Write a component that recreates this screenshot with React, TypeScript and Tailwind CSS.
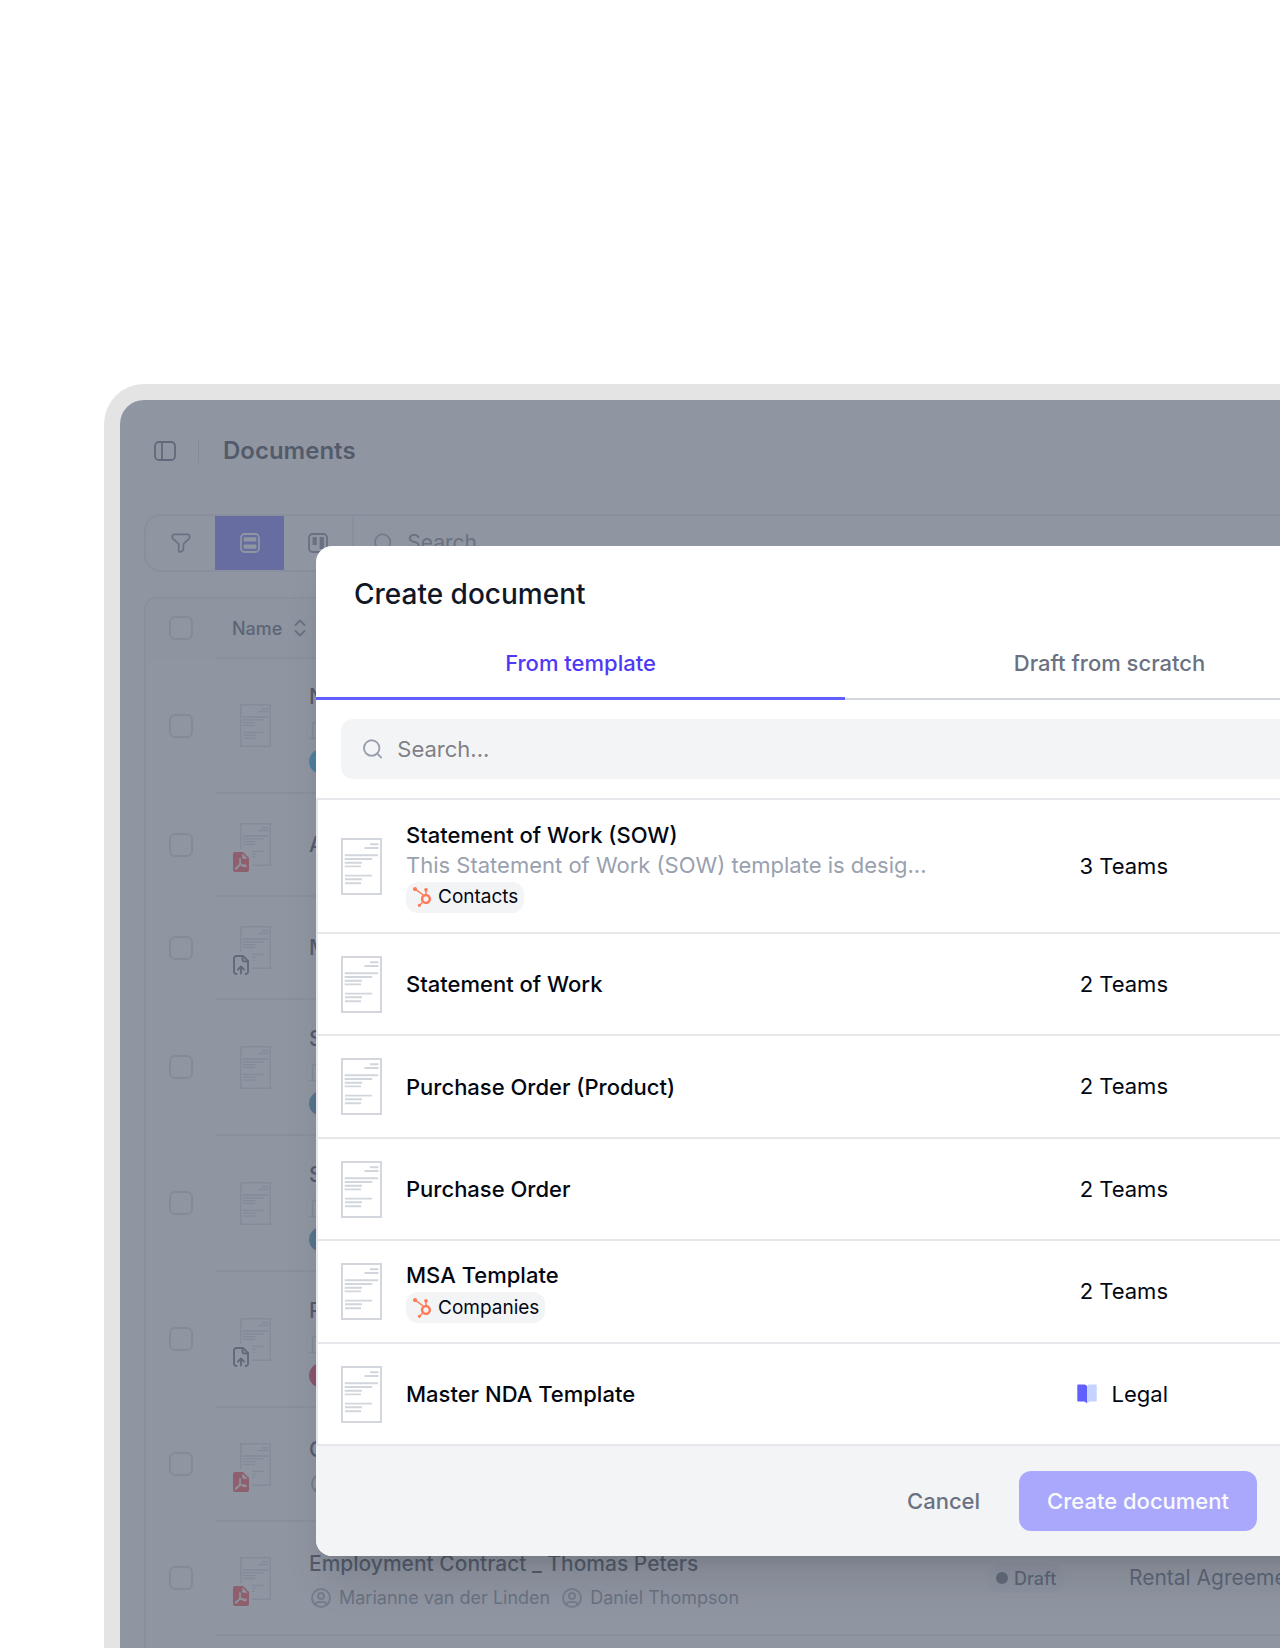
import React from "react";
import clsx from "clsx";
import { FaHubspot } from "react-icons/fa";
import { TbUserCircle } from "react-icons/tb";

//-----> Types <----------------------------------------------//
type Badge = "pdf" | "upload";

type DocumentRow = {
  name: string;
  badge?: Badge;
  company?: boolean;
  people?: string[];
  pill?: string;
  status?: string;
  type?: string;
  height: string;
};

type Template = {
  name: string;
  description?: string;
  object?: string;
  team: string;
  teamIcon?: boolean;
};

//-----> Data <----------------------------------------------//
const documents: DocumentRow[] = [
  { name: "N", company: true, pill: "bg-sky-500", height: "h-[135px]" },
  { name: "A", badge: "pdf", height: "h-[103px]" },
  { name: "M", badge: "upload", height: "h-[103px]" },
  { name: "S", company: true, pill: "bg-[#1c7fa8]", height: "h-[136px]" },
  { name: "S", company: true, pill: "bg-[#1c7fa8]", height: "h-[136px]" },
  { name: "P", badge: "upload", company: true, pill: "bg-rose-600", height: "h-[136px]" },
  { name: "C", badge: "pdf", people: [""], height: "h-[114px]" },
  {
    name: "Employment Contract _ Thomas Peters",
    badge: "pdf",
    people: ["Marianne van der Linden", "Daniel Thompson"],
    status: "Draft",
    type: "Rental Agreeme",
    height: "h-[114px]",
  },
  { name: "", height: "h-[114px]" },
];

const templates: Template[] = [
  {
    name: "Statement of Work (SOW)",
    description: "This Statement of Work (SOW) template is desig...",
    object: "Contacts",
    team: "3 Teams",
  },
  { name: "Statement of Work", team: "2 Teams" },
  { name: "Purchase Order (Product)", team: "2 Teams" },
  { name: "Purchase Order", team: "2 Teams" },
  { name: "MSA Template", object: "Companies", team: "2 Teams" },
  { name: "Master NDA Template", team: "Legal", teamIcon: true },
];

//-----> Icons <----------------------------------------------//
const SidebarIcon = () => (
  <svg width="22" height="20" viewBox="0 0 22 20" fill="none" stroke="currentColor" strokeWidth="1.8">
    <rect x="1" y="1" width="20" height="18" rx="4" />
    <path d="M8 1v18" />
  </svg>
);

const FilterIcon = () => (
  <svg width="20" height="20" viewBox="0 0 20 20" fill="none" stroke="currentColor" strokeWidth="1.8" strokeLinejoin="round">
    <path d="M3 1.4h14c1 0 1.6.7 1.6 1.6v1.2c0 .6-.3 1.2-.7 1.6L13 10.4c-.4.4-.6.9-.6 1.4v4.5c0 .6-.3 1.1-.8 1.4l-1.8 1c-1 .5-2.1-.1-2.1-1.2v-5.7c0-.5-.2-1-.5-1.4L2 5.8c-.4-.4-.6-1-.6-1.5V3c0-.9.7-1.6 1.6-1.6Z" />
  </svg>
);

const ListIcon = () => (
  <svg width="20" height="20" viewBox="0 0 20 20" fill="none" stroke="currentColor" strokeWidth="1.8">
    <rect x="1" y="1" width="18" height="18" rx="3.5" />
    <rect x="3.7" y="4.3" width="12.6" height="4.2" rx="0.5" fill="currentColor" stroke="none" />
    <rect x="3.7" y="11.6" width="12.6" height="4.2" rx="0.5" fill="currentColor" stroke="none" />
  </svg>
);

const BoardIcon = () => (
  <svg width="20" height="20" viewBox="0 0 20 20" fill="none" stroke="currentColor" strokeWidth="1.8">
    <rect x="1" y="1" width="18" height="18" rx="3.5" />
    <rect x="4.5" y="4" width="4.3" height="8" fill="currentColor" stroke="none" />
    <rect x="11.6" y="4" width="4.3" height="12" fill="currentColor" stroke="none" />
  </svg>
);

const SearchIcon = () => (
  <svg width="20" height="20" viewBox="0 0 20 20" fill="none" stroke="currentColor" strokeWidth="2" strokeLinecap="round">
    <circle cx="9" cy="9" r="8" />
    <path d="m14.7 14.7 4.2 4.2" />
  </svg>
);

const SortIcon = () => (
  <svg width="12" height="18" viewBox="0 0 12 18" fill="none" stroke="currentColor" strokeWidth="1.8" strokeLinecap="round" strokeLinejoin="round">
    <path d="m1.5 6 4.5-4.5L10.5 6M1.5 12 6 16.5l4.5-4.5" />
  </svg>
);

const PdfIcon = () => (
  <svg width="16" height="20" viewBox="0 0 16 20" fill="none">
    <path className="fill-red-500" d="M2 0h8l6 6v12a2 2 0 0 1-2 2H2a2 2 0 0 1-2-2V2a2 2 0 0 1 2-2Z" />
    <path className="fill-white" d="M9.3 1.5 14.5 6.7h-4a1.2 1.2 0 0 1-1.2-1.2Z" />
    <path
      className="stroke-white"
      strokeWidth="1.2"
      strokeLinecap="round"
      strokeLinejoin="round"
      d="M7 6.5c-.8 2.5.5 5.5 2.5 7.2 1.5 1.2 3.5 1.2 3.7.2.2-1.2-3-1.3-6-.4-2.500.7-4.700 2-4.700 3.100 0 1.200 1.700.3 3-2.300C6.800 11.800 8 8.500 7 6.500Z"
    />
  </svg>
);

const UploadIcon = () => (
  <svg width="16" height="20" viewBox="0 0 16 20" fill="none" stroke="currentColor" strokeWidth="1.9" strokeLinecap="round" strokeLinejoin="round">
    <path d="M3.5 19C2 19 1 18 1 16.5v-13C1 2 2 1 3.5 1H10l5 5v10.5c0 1.5-1 2.5-2.5 2.5" />
    <path d="M9.5 1.500V5c0 .9.6 1.500 1.500 1.500h3.500M8 18.500v-6M5 14.500l3-3 3 3" />
  </svg>
);

const BuildingIcon = () => (
  <svg className="mt-[7px] block" width="21" height="21" viewBox="0 0 21 21" fill="none" stroke="currentColor" strokeWidth="1.5" strokeLinecap="round" strokeLinejoin="round">
    <path d="M1 18.500h19M3.500 18.500V4a1.500 1.500 0 0 1 1.500-1.500h6A1.500 1.500 0 0 1 12.500 4v14.500M12.500 9H16a1.500 1.500 0 0 1 1.500 1.500v8" />
  </svg>
);

const BookIcon = () => (
  <svg width="20" height="20" viewBox="0 0 20 20">
    <path className="fill-indigo-200" d="M10 2.200C11 1 12 .6 13.500.6H19c.4 0 .7.3.7.7v15.400c0 .4-.3.7-.7.7h-4.500c-2 0-3.500.6-4.500 2Z" />
    <path className="fill-indigo-500" d="M10 2.200C9 1 8 .6 6.500.6H1C.6.6.3.9.3 1.300v15.400c0 .4.3.7.7.7h4.500c2 0 3.500.6 4.500 2Z" />
  </svg>
);

const PageIcon = ({ className }: { className: string }) => (
  <svg className={className} viewBox="0 0 41 57" fill="none" stroke="currentColor" strokeWidth="1.9">
    <rect x="1" y="1" width="39" height="55" fill="white" />
    <path d="M29 6.2h8.5M23.5 10h14M3.7 17.2h33.5M3.7 21h27.5M3.7 24.7h17.3M3.7 28.4h16.3M4 37.6h27M4 41.3h17M4 45.2h16" />
  </svg>
);

//-----> Documents page <----------------------------------------------//
const Checkbox = ({ label }: { label: string }) => (
  <input
    type="checkbox"
    aria-label={label}
    className="mx-auto block size-6 appearance-none rounded-md border-2 border-gray-300 bg-white"
  />
);

const DocumentsTable = () => (
  <div className="mt-[25px] overflow-hidden rounded-tl-xl border-t-2 border-l-2 border-gray-200">
    <table className="w-full table-fixed border-separate border-spacing-0 text-left">
      <thead className="bg-gray-50">
        <tr className="h-[60px]">
          <th className="w-[70px] border-b-2 border-transparent">
            <Checkbox label="Select all" />
          </th>
          <th className="w-[93px] border-b-2 border-gray-200 pl-4 font-medium whitespace-nowrap">
            <button className="flex items-center gap-3 text-[18px] text-gray-700">
              Name
              <span className="text-gray-500">
                <SortIcon />
              </span>
            </button>
          </th>
          <th className="border-b-2 border-gray-200" />
          <th className="w-[142px] border-b-2 border-gray-200" />
          <th className="w-[151px] border-b-2 border-gray-200" />
        </tr>
      </thead>
      <tbody>
        {documents.map((doc, index) => (
          <tr key={index} className={doc.height}>
            <td className="border-b-2 border-transparent">
              <Checkbox label={`Select ${doc.name}`} />
            </td>
            <td className="border-b-2 border-gray-200 pl-6">
              <div className="relative w-fit text-gray-300">
                <PageIcon className="h-[43px] w-[31px]" />
                {doc.badge && (
                  <span className="absolute top-[26px] -left-[10px] bg-white p-[3px]">
                    {doc.badge === "pdf" ? (
                      <PdfIcon />
                    ) : (
                      <span className="text-gray-600">
                        <UploadIcon />
                      </span>
                    )}
                  </span>
                )}
              </div>
            </td>
            <td className={clsx("border-b-2 border-gray-200", doc.pill && "pt-1")}>
              <div className="truncate text-[21px] leading-8 font-medium text-gray-900">
                {doc.name}
              </div>
              {doc.company && (
                <span className="text-gray-300">
                  <BuildingIcon />
                </span>
              )}
              {doc.people && (
                <div className="mt-[7px] flex h-[21px] items-center gap-2.5 text-[18px] whitespace-nowrap text-gray-500">
                  {doc.people.map((person) => (
                    <span key={person} className="flex items-center gap-1.5">
                      <TbUserCircle className="size-6 text-gray-400" />
                      {person}
                    </span>
                  ))}
                </div>
              )}
              {doc.pill && <div className={clsx("mt-2 h-[25px] w-24 rounded-full", doc.pill)} />}
            </td>
            <td className="border-b-2 border-gray-200">
              {doc.status && (
                <span className="flex h-[30px] w-fit items-center gap-1.5 rounded-full bg-gray-100 px-[9px] text-[18px] font-medium text-gray-700">
                  <span className="size-3 rounded-full bg-gray-600" />
                  {doc.status}
                </span>
              )}
            </td>
            <td className="border-b-2 border-gray-200 text-[21px] whitespace-nowrap text-gray-700">
              {doc.type}
            </td>
          </tr>
        ))}
      </tbody>
    </table>
  </div>
);

const DocumentsPage = () => (
  <div className="pl-6">
    <header className="flex h-[102px] items-center pl-[10px]">
      <button aria-label="Toggle sidebar" className="text-gray-600">
        <SidebarIcon />
      </button>
      <div className="mx-6 ml-[22px] h-6 w-px bg-gray-300" />
      <h1 className="text-2xl font-semibold text-gray-900">Documents</h1>
    </header>
    <div className="mt-3 flex h-[58px] overflow-hidden rounded-l-2xl border-2 border-r-0 border-gray-200">
      <button aria-label="Filter" className="flex w-[69px] items-center justify-center text-gray-500">
        <FilterIcon />
      </button>
      <button aria-label="List view" className="flex w-[69px] items-center justify-center bg-indigo-500 text-white">
        <ListIcon />
      </button>
      <button aria-label="Board view" className="flex w-[70px] items-center justify-center border-r-2 border-gray-200 text-gray-500">
        <BoardIcon />
      </button>
      <label className="flex flex-1 items-center gap-3.5 pl-5 text-gray-400">
        <SearchIcon />
        <input
          aria-label="Search documents"
          placeholder="Search"
          className="w-full text-[21px] outline-none placeholder:text-gray-500"
        />
      </label>
    </div>
    <DocumentsTable />
  </div>
);

//-----> Create document dialog <----------------------------------------------//
const TemplateRow = ({ name, description, object, team, teamIcon }: Template) => (
  <tr className={description ? "h-[134px]" : "h-[102px] odd:h-[103px]"}>
    <td className="w-[88px] border-b-2 border-gray-200 pl-[23px] text-gray-300">
      <PageIcon className="h-[57px] w-[41px]" />
    </td>
    <td className="border-b-2 border-gray-200 py-4 text-[22px] leading-[30px]">
      <div className="font-medium text-gray-950">{name}</div>
      {description && <div className="text-gray-400">{description}</div>}
      {object && (
        <div className="mt-0.5 flex h-[31px] w-fit items-center gap-1.5 rounded-xl bg-gray-100 px-1.5 text-[19px] text-gray-950">
          <FaHubspot className="size-5 text-[#ff7a59]" />
          {object}
        </div>
      )}
    </td>
    <td className="w-[350px] border-b-2 border-gray-200 pr-[206px] text-[22px] whitespace-nowrap text-gray-950">
      <div className="flex items-center justify-end gap-[15px]">
        {teamIcon && <BookIcon />}
        {team}
      </div>
    </td>
  </tr>
);

const CreateDocumentDialog = () => (
  <div
    role="dialog"
    aria-labelledby="dialog-title"
    className="absolute top-[146px] -right-[94px] left-[196px] overflow-hidden rounded-2xl bg-white shadow-[0_33px_41px_-8px_rgba(0,0,0,0.1),0_13px_16px_-10px_rgba(0,0,0,0.1)]"
  >
    <h2 id="dialog-title" className="flex h-20 items-center px-[38px] pt-4 text-[28px] font-medium text-gray-900">
      Create document
    </h2>
    <div role="tablist" className="grid h-[74px] grid-cols-2 text-[22px] font-medium">
      <button role="tab" aria-selected="true" className="border-b-3 border-indigo-500 pt-1 text-indigo-600">
        From template
      </button>
      <button role="tab" aria-selected="false" className="border-b-2 border-gray-300 pt-[3px] text-gray-500">
        Draft from scratch
      </button>
    </div>
    <div className="px-[25px] py-[19px]">
      <label className="flex h-[60px] items-center gap-[15px] rounded-xl bg-gray-100 pl-[22px] text-gray-400">
        <SearchIcon />
        <input
          aria-label="Search templates"
          placeholder="Search..."
          className="w-full text-[22px] outline-none placeholder:text-[#7f8187]"
        />
      </label>
    </div>
    <table className="w-full border-separate border-spacing-0 border-t-2 border-l-2 border-gray-200">
      <tbody>
        {templates.map((template) => (
          <TemplateRow key={template.name} {...template} />
        ))}
      </tbody>
    </table>
    <div className="flex h-[110px] items-center justify-end gap-[39px] bg-gray-100 pr-[117px] text-[22px] font-medium">
      <button className="text-gray-500">Cancel</button>
      <button className="h-[60px] rounded-xl bg-[#aaa8fc] px-7 text-gray-50">Create document</button>
    </div>
  </div>
);

const App = () => {
  return (
    <div className="flex h-screen overflow-hidden bg-white pt-96 pl-[104px] font-['Inter',sans-serif]">
      <main className="relative min-w-0 flex-1 overflow-hidden rounded-tl-[40px] border-t-16 border-l-16 border-[#e4e4e4]">
        <DocumentsPage />
        <div className="absolute inset-0 bg-gray-500/75" />
        <CreateDocumentDialog />
      </main>
    </div>
  );
};

export default App;
